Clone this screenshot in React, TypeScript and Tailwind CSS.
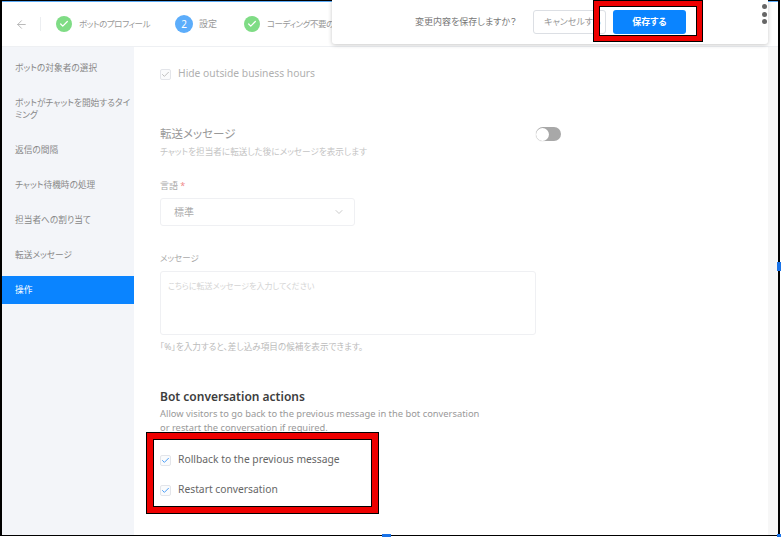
import { ArrowLeft, Check, ChevronDown } from "lucide-react";

const menu = [
  "ボットの対象者の選択",
  "ボットがチャットを開始するタイミング",
  "返信の間隔",
  "チャット待機時の処理",
  "担当者への割り当て",
  "転送メッセージ",
];

const font = "font-['Noto_Sans','Noto_Sans_CJK_JP',sans-serif]";

const StepDone = ({ label }: { label: string }) => (
  <div className="flex items-center gap-[7px] whitespace-nowrap">
    <span className="flex h-4 w-4 items-center justify-center rounded-full bg-[#7fdc85] text-white">
      <Check size={10} strokeWidth={3} />
    </span>
    <span className="w-[72px] text-[8.5px] tracking-[-0.45px] text-[#999]">{label}</span>
  </div>
);

const CheckRow = ({ label, muted }: { label: string; muted?: boolean }) => (
  <div className="flex h-[18px] items-center gap-[7px]">
    <span className="flex h-[11px] w-[11px] items-center justify-center rounded-[2px] border border-[#e3e5ea] bg-[#fafbfc]">
      <Check size={9} strokeWidth={muted ? 2 : 2.5} className={muted ? "text-[#aaa]" : "text-[#3f97f7]"} />
    </span>
    <span className={muted ? "text-[10.3px] text-[#b0b0b0]" : "text-[10.3px] text-[#666]"}>{label}</span>
  </div>
);

export default function App() {
  return (
    <div className={`relative h-[537px] w-[781px] overflow-hidden bg-white [font-feature-settings:'palt'] ${font}`}>
      <div className="flex h-[536px] w-[780px] flex-col border-y border-l-2 border-r-2 border-black">
        {/* header */}
        <div className="flex h-[46px] shrink-0 flex-col border-b border-[#eef0f3]">
          <div className="h-px w-full bg-[#5aa9f5]" />
          <div className="flex flex-1 items-center pl-[13px]">
            <ArrowLeft size={13} strokeWidth={1.5} className="text-[#aaa]" />
            <span className="ml-[12px] mr-[15px] h-[14px] w-px bg-[#eceef1]" />
            <StepDone label="ボットのプロフィール" />
            <div className="ml-[24px] flex items-center gap-[6px]">
              <span className="flex h-[18px] w-[18px] items-center justify-center rounded-full bg-[#5cadfb] text-[10px] text-white">
                2
              </span>
              <span className="text-[9px] text-[#999]">設定</span>
            </div>
            <div className="ml-[27px]">
              <StepDone label="コーディング不要のチャット" />
            </div>
          </div>
        </div>

        <div className="flex min-h-0 flex-1">
          {/* sidebar */}
          <div className="flex w-[132px] shrink-0 flex-col bg-[#f3f5f9] pt-[3px]">
            {menu.map((item) => (
              <div key={item} className="py-[11.5px] pl-[13px] pr-[3px] text-[8.7px] leading-[12px] text-[#888]">
                {item}
              </div>
            ))}
            <div className="mt-[4px] flex h-[28px] items-center bg-[#0a84ff] px-[13px] pt-[2px] text-[8.7px] text-white">操作</div>
          </div>

          {/* main */}
          <div className="flex min-w-0 flex-1 flex-col pl-[26px] pt-[18px]">
            <CheckRow label="Hide outside business hours" muted />

            <div className="mt-[43px] flex w-[401px] items-start justify-between">
              <div>
                <div className="text-[11.5px] leading-[16px] text-[#999]">転送メッセージ</div>
                <div className="mt-[4px] text-[8.6px] leading-[13px] text-[#c4c4c4]">
                  チャットを担当者に転送した後にメッセージを表示します
                </div>
              </div>
              <span className="mt-[1px] flex h-[14px] w-[25px] items-center rounded-full bg-[#a8a8a8]">
                <span className="h-[13px] w-[13px] rounded-full bg-white shadow-[0_0_1px_#999]" />
              </span>
            </div>

            <div className="mt-[20px] text-[9px] leading-[13px] text-[#aaa]">
              言語 <span className="text-[#f08a8a]">*</span>
            </div>
            <div className="mt-[6px] flex h-[28px] w-[195px] items-center justify-between rounded-[3px] border border-[#eff0f3] pl-[13px] pr-[9px] text-[10px] text-[#aaa]">
              標準
              <ChevronDown size={12} strokeWidth={1.25} className="text-[#aaa]" />
            </div>

            <div className="mt-[25px] text-[8.5px] leading-[13px] text-[#aaa]">メッセージ</div>
            <div className="mt-[7px] h-[64px] w-[376px] rounded-[3px] border border-[#eff0f3] px-[7px] py-[7px] text-[8px] leading-[13px] text-[#d4d4d4]">
              こちらに転送メッセージを入力してください
            </div>
            <div className="mt-[6px] text-[8.6px] leading-[13px] text-[#bbb]">
              「%」を入力すると、差し込み項目の候補を表示できます。
            </div>

            <div className="mt-[35px] text-[12px] font-semibold leading-[16px] text-[#3d3d3d]">
              Bot conversation actions
            </div>
            <div className="mt-[2px] w-[330px] text-[9.35px] leading-[14px] text-[#999]">
              Allow visitors to go back to the previous message in the bot conversation or restart the conversation if required.
            </div>
            <div className="mt-[16px] flex flex-col gap-3">
              <CheckRow label="Rollback to the previous message" />
              <CheckRow label="Restart conversation" />
            </div>
          </div>

          {/* scrollbar strip */}
          <div className="w-[10px] shrink-0 bg-[#f7f7f7]" />
        </div>
      </div>

      {/* save bar overlay */}
      <div className="absolute left-[332px] top-0 flex h-[44px] w-[436px] items-center rounded-b-[3px] bg-white pl-[83px] shadow-[0_1px_4px_rgba(0,0,0,0.22)]">
        <span className="w-[98px] whitespace-nowrap text-[9px] text-[#777]">変更内容を保存しますか？</span>
        <span className="ml-[20px] flex h-[24px] w-[73px] shrink-0 items-center whitespace-nowrap rounded-[3px] border border-[#dcdfe4] pl-[10px] text-[9px] text-[#999]">
          キャンセルする
        </span>
        <span className="ml-[7px] flex h-[24px] w-[73px] shrink-0 items-center justify-center rounded-[3px] bg-[#0a84ff] text-[9px] font-semibold text-white">
          保存する
        </span>
      </div>

      {/* screenshot annotations */}
      <div className="absolute left-[594px] top-[1px] h-[40px] w-[108px] border-[5px] border-[#ee0000] shadow-[inset_0_0_0_1px_#000] outline outline-1 outline-black" />
      <div className="absolute left-[147px] top-[433px] h-[80px] w-[231px] border-[6px] border-[#ee0000] shadow-[inset_0_0_0_1px_#000] outline outline-1 outline-black" />
      <div className="absolute left-[762px] top-[4px] flex flex-col gap-[2.5px]">
        <span className="h-[5px] w-[5px] rounded-full bg-[#666]" />
        <span className="h-[5px] w-[5px] rounded-full bg-[#666]" />
        <span className="h-[5px] w-[5px] rounded-full bg-[#666]" />
      </div>
      <span className="absolute left-[777px] top-[262px] h-[9px] w-[4px] bg-[#1a73e8]" />
      <span className="absolute left-[382px] top-[534px] h-[3px] w-[9px] bg-[#1a73e8]" />
      <span className="absolute left-[777px] top-[534px] h-[3px] w-[4px] bg-[#1a73e8]" />
    </div>
  );
}
